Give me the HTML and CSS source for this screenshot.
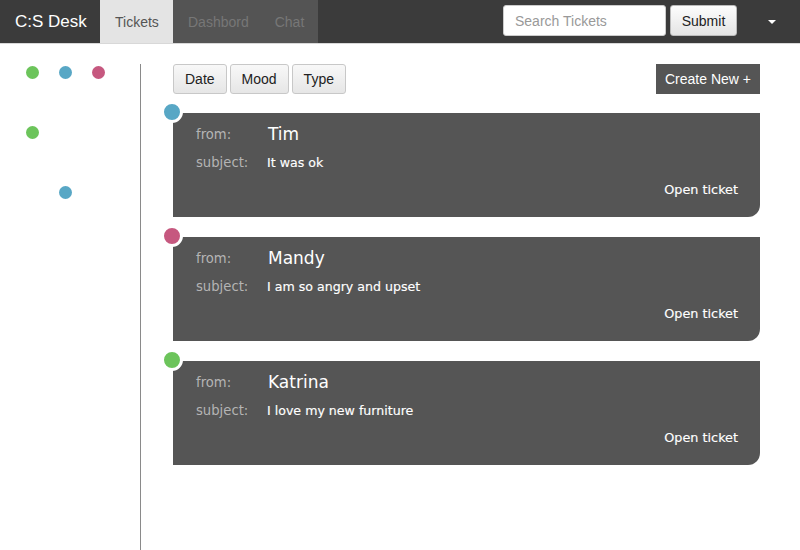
FILE: index.html
```html
<!DOCTYPE html>
<html>
<head>
<meta charset="utf-8">
<link rel="stylesheet" href="styles.css">
</head>
<body>
<header class="nav">
  <div class="brand">C:S Desk</div>
  <ul class="tabs">
    <li class="tab active">Tickets</li>
    <li class="tab muted">Dashbord</li>
    <li class="tab muted chat">Chat</li>
  </ul>
  <form class="search">
    <input class="search-input" type="text" placeholder="Search Tickets">
    <button class="submit" type="button">Submit</button>
  </form>
  <span class="caret"></span>
</header>
<div class="layout">
  <aside class="sidebar">
    <div class="dots">
      <span class="dot green"></span>
      <span class="dot blue"></span>
      <span class="dot pink"></span>
      <span class="dot green"></span>
      <span></span>
      <span></span>
      <span></span>
      <span class="dot blue"></span>
    </div>
  </aside>
  <main class="main">
    <div class="toolbar">
      <div class="filters">
        <button class="filter">Date</button>
        <button class="filter">Mood</button>
        <button class="filter">Type</button>
      </div>
      <button class="create">Create New +</button>
    </div>
    <div class="tickets">
      <article class="ticket">
        <span class="marker blue"></span>
        <div class="row"><span class="label">from:</span><span class="name">Tim</span></div>
        <div class="row"><span class="label">subject:</span><span class="subject">It was ok</span></div>
        <div class="open">Open ticket</div>
      </article>
      <article class="ticket">
        <span class="marker pink"></span>
        <div class="row"><span class="label">from:</span><span class="name">Mandy</span></div>
        <div class="row"><span class="label">subject:</span><span class="subject">I am so angry and upset</span></div>
        <div class="open">Open ticket</div>
      </article>
      <article class="ticket">
        <span class="marker green"></span>
        <div class="row"><span class="label">from:</span><span class="name">Katrina</span></div>
        <div class="row"><span class="label">subject:</span><span class="subject">I love my new furniture</span></div>
        <div class="open">Open ticket</div>
      </article>
    </div>
  </main>
</div>
</body>
</html>
```
FILE: styles.css
```css
* { box-sizing: border-box; }
html, body { margin: 0; padding: 0; background: #fff; }
body {
  font-family: "Liberation Sans", Arial, sans-serif;
  width: 800px;
  height: 550px;
  overflow: hidden;
}

.nav {
  display: flex;
  align-items: center;
  height: 44px;
  background: #3b3b3b;
  border-bottom: 1px solid #d8d8d8;
}
.brand {
  width: 100px;
  padding-left: 15px;
  color: #fff;
  font-size: 17px;
}
.tabs {
  display: flex;
  list-style: none;
  margin: 0;
  padding: 0;
  height: 43px;
}
.tab {
  display: flex;
  align-items: center;
  padding: 0 15px;
  font-size: 14px;
}
.tab.active { background: #e4e4e4; color: #555; width: 73px; }
.tab.muted { background: #545454; color: #777; }
.tab.chat { padding: 0 14px 0 11px; }

.search {
  display: flex;
  gap: 4px;
  margin: 0 31px 2px auto;
}
.search-input {
  width: 163px;
  height: 31px;
  border: 1px solid #ccc;
  border-radius: 3px;
  padding: 0 11px;
  font-family: "Liberation Sans", Arial, sans-serif;
  font-size: 14px;
  color: #333;
  background: #fff;
}
.search-input::placeholder { color: #999; }
.submit {
  width: 67px;
  height: 31px;
  border: 1px solid #bbb;
  border-radius: 3px;
  background: linear-gradient(#fdfdfd, #e4e4e4);
  font-family: "Liberation Sans", Arial, sans-serif;
  font-size: 14px;
  color: #222;
  padding: 0;
}
.caret {
  width: 0;
  height: 0;
  border-left: 4px solid transparent;
  border-right: 4px solid transparent;
  border-top: 4px solid #fff;
  margin-right: 24px;
  margin-top: 1px;
}

.layout {
  display: flex;
}
.sidebar {
  width: 141px;
  height: 486px;
  margin-top: 20px;
  border-right: 1px solid #8a8a8a;
  padding: 2px 0 0 26px;
}
.dots {
  display: grid;
  grid-template-columns: repeat(3, 13px);
  grid-auto-rows: 13px;
  column-gap: 20px;
  row-gap: 47px;
}
.dot {
  width: 13px;
  height: 13px;
  border-radius: 50%;
}
.green { background: #6cc45b; }
.blue { background: #58a7c5; }
.pink { background: #c6587f; }

.main {
  flex: 1;
  padding: 20px 40px 0 32px;
}
.toolbar {
  display: flex;
  justify-content: space-between;
  align-items: center;
  height: 30px;
}
.filters {
  display: flex;
  gap: 3px;
}
.filter {
  height: 30px;
  padding: 0 11px;
  border: 1px solid #c8c8c8;
  border-radius: 3px;
  background: linear-gradient(#f8f8f8, #e6e6e6);
  font-family: "Liberation Sans", Arial, sans-serif;
  font-size: 14px;
  color: #222;
}
.create {
  height: 30px;
  width: 104px;
  padding: 0;
  border: none;
  background: #555;
  color: #fff;
  font-family: "Liberation Sans", Arial, sans-serif;
  font-size: 14px;
}

.tickets {
  display: flex;
  flex-direction: column;
  gap: 20px;
  margin-top: 19px;
}
.ticket {
  position: relative;
  height: 104px;
  background: #555;
  border-bottom-right-radius: 12px;
  padding: 11px 22px 0 23px;
  font-family: "DejaVu Sans", Verdana, sans-serif;
  color: #fff;
}
.marker {
  position: absolute;
  left: -12px;
  top: -12px;
  width: 22px;
  height: 22px;
  border-radius: 50%;
  border: 3px solid #fff;
}
.row {
  display: flex;
  align-items: center;
  height: 20px;
}
.row + .row { margin-top: 8px; }
.label {
  width: 71px;
  color: #b4b4b4;
  font-size: 13.2px;
}
.name {
  font-size: 17px;
  padding-left: 1px;
}
.subject {
  font-size: 12.6px;
  -webkit-text-stroke: 0.15px #fff;
}
.open {
  text-align: right;
  font-size: 12.8px;
  margin-top: 10px;
  -webkit-text-stroke: 0.15px #fff;
}
```
